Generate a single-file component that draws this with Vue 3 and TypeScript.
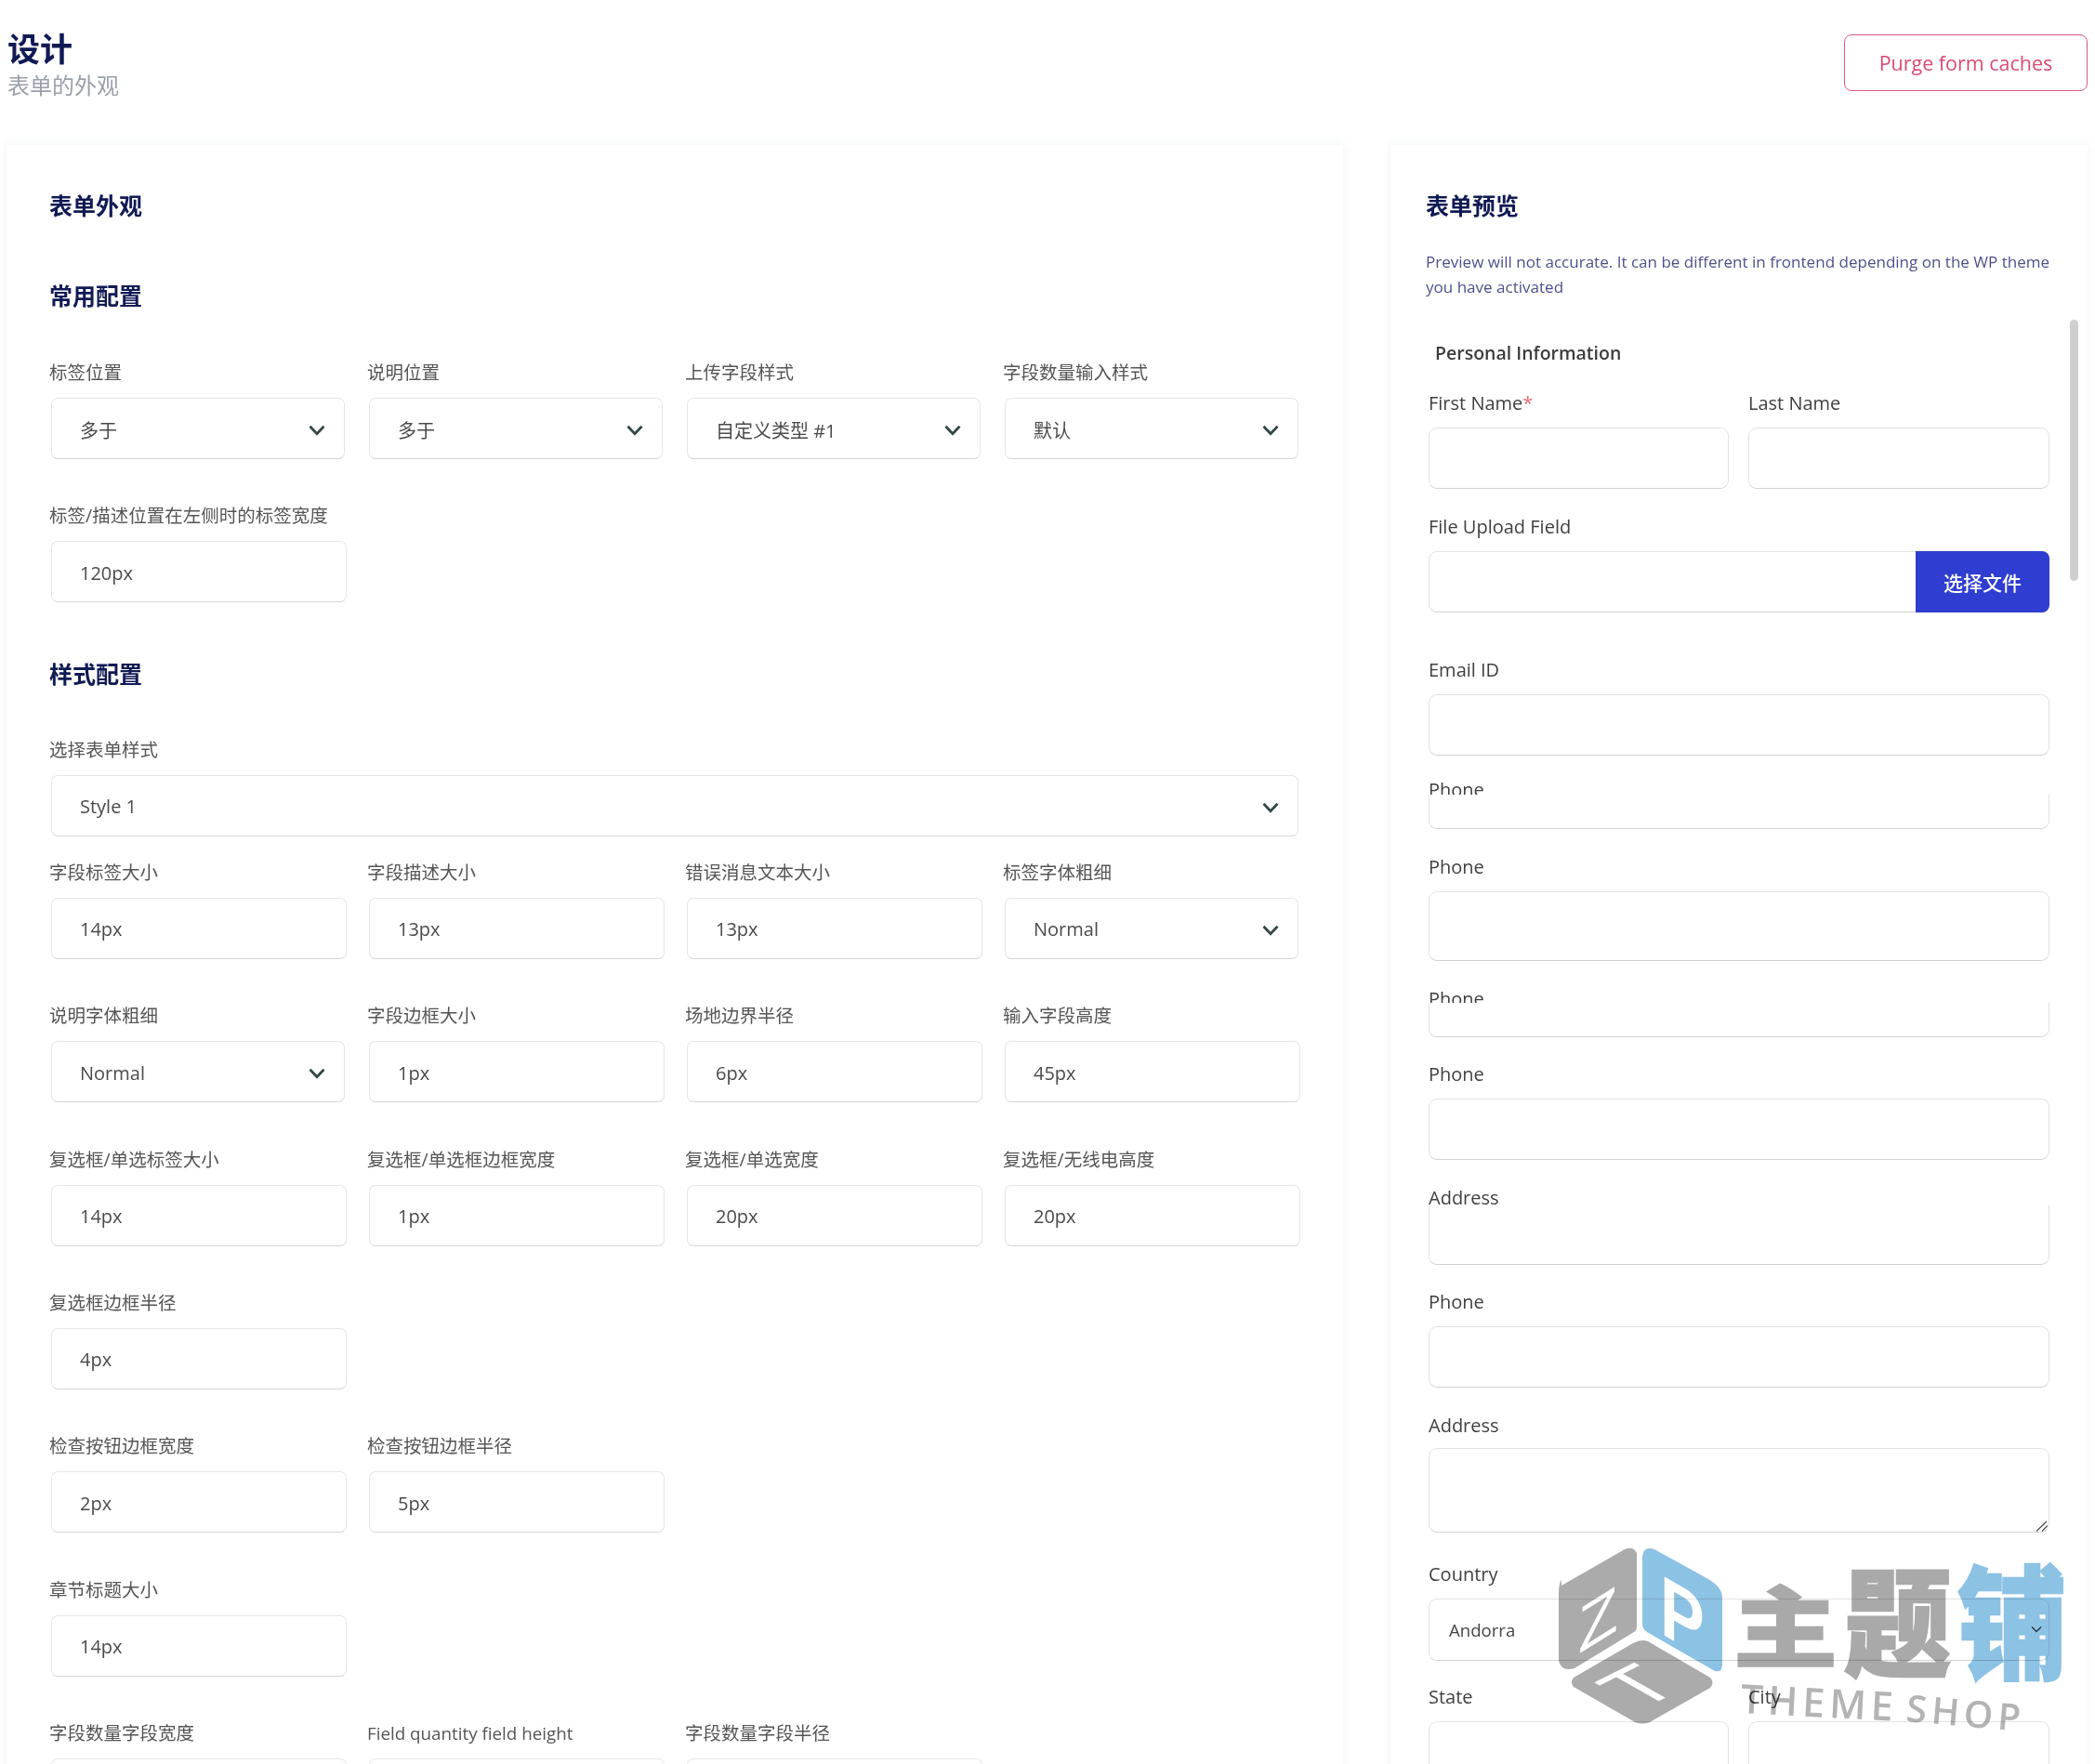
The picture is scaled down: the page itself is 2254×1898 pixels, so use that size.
<template>
  <div class="page">
    <header class="top">
      <div>
        <h1 class="title">设计</h1>
        <p class="subtitle">表单的外观</p>
      </div>
      <button class="purge">Purge form caches</button>
    </header>

    <div class="columns">
      <section class="card left">
        <h2 class="heading">表单外观</h2>
        <h2 class="heading second">常用配置</h2>
        <div class="grid first-grid">
          <div v-for="f in commonFields" :key="f.label" class="field" :class="{ breakrow: f.newRow }">
            <label class="label">{{ f.label }}</label>
            <div class="control" :class="{ sel: f.select }">
              <span>{{ f.value }}</span>
              <svg v-if="f.select" class="chev" viewBox="0 0 18 12"><path d="M1.500 1.800 9 9.800l7.500-8" /></svg>
            </div>
          </div>
        </div>

        <h2 class="heading third">样式配置</h2>
        <div class="wide-field">
          <label class="label">选择表单样式</label>
          <div class="control sel wide">
            <span>Style 1</span>
            <svg class="chev" viewBox="0 0 18 12"><path d="M1.500 1.800 9 9.800l7.500-8" /></svg>
          </div>
        </div>
        <div class="grid">
          <div v-for="f in styleFields" :key="f.label" class="field" :class="{ breakrow: f.newRow }">
            <label class="label" :class="{ latin: f.latin }">{{ f.label }}</label>
            <div class="control" :class="{ sel: f.select }">
              <span>{{ f.value }}</span>
              <svg v-if="f.select" class="chev" viewBox="0 0 18 12"><path d="M1.500 1.800 9 9.800l7.500-8" /></svg>
            </div>
          </div>
        </div>
      </section>

      <section class="card right">
        <h2 class="heading">表单预览</h2>
        <p class="note">Preview will not accurate. It can be different in frontend depending on the WP theme you have activated</p>
        <div class="preview">
          <div class="thumb"></div>
          <h3 class="section-title">Personal Information</h3>

          <div class="two">
            <div>
              <label class="plabel">First Name<em>*</em></label>
              <input class="pinput" type="text" />
            </div>
            <div>
              <label class="plabel">Last Name</label>
              <input class="pinput" type="text" />
            </div>
          </div>

          <div class="pfield">
            <label class="plabel">File Upload Field</label>
            <div class="upload"><button class="choose">选择文件</button></div>
          </div>

          <div class="pfield email">
            <label class="plabel">Email ID</label>
            <input class="pinput" type="text" />
          </div>

          <div class="pfield phone-cut">
            <label class="plabel">Phone</label>
            <input class="pinput cut" type="text" />
          </div>
          <div class="pfield">
            <label class="plabel">Phone</label>
            <input class="pinput tall" type="text" />
          </div>
          <div class="pfield">
            <label class="plabel">Phone</label>
            <input class="pinput cut" type="text" />
          </div>
          <div class="pfield tight">
            <label class="plabel">Phone</label>
            <input class="pinput" type="text" />
          </div>
          <div class="pfield">
            <label class="plabel">Address</label>
            <input class="pinput addr" type="text" />
          </div>
          <div class="pfield tight">
            <label class="plabel">Phone</label>
            <input class="pinput" type="text" />
          </div>
          <div class="pfield area-field">
            <label class="plabel">Address</label>
            <textarea class="pinput area"></textarea>
            <svg class="grip" viewBox="0 0 13 12"><path d="M1 11.500 12 1M7 11.500l6-6" /></svg>
          </div>
          <div class="pfield country">
            <label class="plabel">Country</label>
            <div class="pselect">
              <span>Andorra</span>
              <svg class="mini" viewBox="0 0 12 8"><path d="M1 1.500 6 6.500l5-5" /></svg>
            </div>
          </div>
          <div class="two state">
            <div>
              <label class="plabel">State</label>
              <input class="pinput" type="text" />
            </div>
            <div>
              <label class="plabel">City</label>
              <input class="pinput" type="text" />
            </div>
          </div>
        </div>
      </section>
    </div>

    <!-- watermark over the preview column -->
    <svg class="mark" viewBox="1660 1650 580 230" width="580" height="230">
      <path class="g" stroke-linejoin="round" d="M1680 1706 1748 1667q9-4 13 4v80q0 3-3 5l-64 39q-14 4-17-8v-72q0-12 3-15z" />
      <path class="b" d="M1767 1675q1-12 13-8l58 32q15 9 15 20v72q0 9-8 7l-73-42q-5-3-5-9z" />
      <path class="g" d="M1757 1768q9-5 16-2l67 39q5 6 0 11l-65 37q-8 3-16 0l-66-38q-4-5 0-10z" />
      <text class="cube" transform="translate(1698 1780) skewY(-32)" font-size="70">Z</text>
      <text class="cube heavy" transform="translate(1786 1757) skewY(30) scale(.78 1)" font-size="92">P</text>
      <text class="cube" transform="matrix(1.086 -.543 1.067 .6 1765 1840)" font-size="70">T</text>
      <text class="cn grey" transform="translate(1865 1787) scale(1 .85)">主</text>
      <text class="cn grey" transform="translate(1984 1794) scale(1.030 1.140)">题</text>
      <text class="cn blue" transform="translate(2106 1796) scale(1.050 1.180)">铺</text>
      <text class="en" transform="translate(1872 1843) rotate(3)" font-size="43">THEME</text>
      <text class="en" transform="translate(2050 1852) rotate(5)" font-size="40">SHOP</text>
    </svg>
  </div>
</template>

<script setup lang="ts">
interface Field {
  label: string
  value: string
  select?: boolean
  newRow?: boolean
  latin?: boolean
}

const commonFields: Field[] = [
  { label: '标签位置', value: '多于', select: true },
  { label: '说明位置', value: '多于', select: true },
  { label: '上传字段样式', value: '自定义类型 #1', select: true },
  { label: '字段数量输入样式', value: '默认', select: true },
  { label: '标签/描述位置在左侧时的标签宽度', value: '120px', newRow: true },
]

const styleFields: Field[] = [
  { label: '字段标签大小', value: '14px' },
  { label: '字段描述大小', value: '13px' },
  { label: '错误消息文本大小', value: '13px' },
  { label: '标签字体粗细', value: 'Normal', select: true },
  { label: '说明字体粗细', value: 'Normal', select: true },
  { label: '字段边框大小', value: '1px' },
  { label: '场地边界半径', value: '6px' },
  { label: '输入字段高度', value: '45px' },
  { label: '复选框/单选标签大小', value: '14px' },
  { label: '复选框/单选框边框宽度', value: '1px' },
  { label: '复选框/单选宽度', value: '20px' },
  { label: '复选框/无线电高度', value: '20px' },
  { label: '复选框边框半径', value: '4px', newRow: true },
  { label: '检查按钮边框宽度', value: '2px', newRow: true },
  { label: '检查按钮边框半径', value: '5px' },
  { label: '章节标题大小', value: '14px', newRow: true },
  { label: '字段数量字段宽度', value: '', newRow: true },
  { label: 'Field quantity field height', value: '', latin: true },
  { label: '字段数量字段半径', value: '' },
]
</script>

<style scoped>
.page {
  position: relative;
  height: 1898px;
  overflow: hidden;
  background: #fff;
  font-family: "Open Sans", "Noto Sans CJK SC", sans-serif;
  color: #444;
}

.top {
  display: flex;
  justify-content: space-between;
  align-items: flex-start;
  height: 156px;
  padding: 34px 8px 0 8px;
  box-sizing: border-box;
}

.title {
  margin: 0;
  font-size: 35px;
  line-height: 38px;
  font-weight: 700;
  color: #101a54;
}

.subtitle {
  margin: 3px 0 0;
  font-size: 24px;
  line-height: 34px;
  color: #9a9fab;
}

.purge {
  width: 262px;
  height: 61px;
  margin-top: 3px;
  border: 1.500px solid #dc5a7f;
  border-radius: 8px;
  background: #fff;
  color: #db4a74;
  font-family: inherit;
  font-size: 21.500px;
  font-weight: 500;
}

.columns {
  display: grid;
  grid-template-columns: 1438px 750px;
  column-gap: 51px;
  padding-left: 7px;
}

.card {
  background: #fff;
  height: 1750px;
  box-shadow: 0 0 9px rgba(90, 130, 170, 0.1);
  box-sizing: border-box;
}

.left {
  padding: 47px 0 0 46px;
}

.heading {
  margin: 0;
  font-size: 25px;
  line-height: 36px;
  font-weight: 700;
  color: #101a54;
}

.second {
  margin-top: 61px;
}

.third {
  margin-top: 59px;
}

.first-grid {
  margin-top: 51px;
}

.grid {
  display: grid;
  grid-template-columns: repeat(4, 320px);
  column-gap: 22px;
  row-gap: 47.330px;
}

.breakrow {
  grid-column-start: 1;
}

.wide-field {
  margin-top: 49.600px;
  margin-bottom: 25px;
}

.label {
  display: block;
  font-size: 19.500px;
  line-height: 28px;
  margin-bottom: 13px;
  color: #555;
  white-space: nowrap;
}

.latin {
  font-size: 18.800px;
}

.control {
  display: flex;
  align-items: center;
  justify-content: space-between;
  width: 318px;
  height: 66px;
  margin-left: 2px;
  padding: 2px 20px 0 30px;
  border: 1px solid #e6e6e6;
  border-bottom-color: #d6d6d6;
  border-radius: 7px;
  box-sizing: border-box;
  background: #fff;
  font-size: 20px;
  color: #4a4a4a;
}

.sel {
  width: 316px;
}

.wide {
  width: 1342px;
}

.chev {
  width: 18px;
  height: 12px;
  margin-top: 2px;
  fill: none;
  stroke: #344848;
  stroke-width: 2.800;
}

.right {
  padding: 47px 0 0 38px;
}

.note {
  width: 690px;
  margin: 29px 0 0;
  font-size: 17.050px;
  line-height: 27px;
  color: #4f4f8d;
}

.preview {
  position: relative;
  margin-top: 19px;
  padding: 0 0 0 3px;
  width: 671px;
}

.thumb {
  position: absolute;
  left: 693px;
  top: 3px;
  width: 9px;
  height: 281px;
  border-radius: 5px;
  background: #cfcfcf;
}

.section-title {
  margin: 0 0 0 7px;
  padding-top: 21px;
  font-size: 19.500px;
  line-height: 36px;
  font-weight: 600;
  color: #3c3c3c;
}

.two {
  display: grid;
  grid-template-columns: 323px 324px;
  column-gap: 21px;
  margin-top: 22px;
}

.plabel {
  display: block;
  font-size: 20px;
  line-height: 28px;
  margin-bottom: 12px;
  color: #3f3f3f;
}

.plabel em {
  color: #e46a7c;
  font-style: normal;
}

.pinput {
  display: block;
  width: 100%;
  height: 66px;
  padding: 0;
  border: 1px solid #e2e2e2;
  border-bottom-color: #d2d2d2;
  border-radius: 9px;
  box-sizing: border-box;
  background: #fff;
  outline: none;
  font: inherit;
}

.pfield {
  width: 668px;
  margin-top: 27px;
}

.tight {
  margin-top: 26px;
}

.upload {
  display: flex;
  justify-content: flex-end;
  height: 66px;
  border: 1px solid #e2e2e2;
  border-bottom-color: #d2d2d2;
  border-radius: 9px;
  box-sizing: border-box;
}

.choose {
  width: 144px;
  margin: -1px -1px -1px 0;
  border: none;
  border-radius: 0 8px 8px 0;
  background: #2f3dd0;
  color: #fff;
  font-family: inherit;
  font-size: 21px;
  font-weight: 500;
}

.email {
  margin-top: 48px;
}

/* these inputs sit over the lower half of their own label */
.cut {
  position: relative;
  height: 37px;
  margin-top: -21.500px;
  border-top: none;
  border-radius: 0 0 9px 9px;
}

.phone-cut {
  margin-top: 23px;
}

.tall {
  height: 75px;
}

.addr {
  position: relative;
  height: 64px;
  margin-top: -18.500px;
  border-top: none;
  border-radius: 0 0 9px 9px;
  background: transparent;
}

.area-field {
  position: relative;
}

.area-field .plabel {
  margin-bottom: 10px;
}

.area {
  height: 91px;
  resize: none;
}

.grip {
  position: absolute;
  right: 2px;
  bottom: 1px;
  width: 13px;
  height: 12px;
  fill: none;
  stroke: #4a4a4a;
  stroke-width: 1.200;
}

.country {
  margin-top: 31px;
}

.pselect {
  display: flex;
  align-items: center;
  justify-content: space-between;
  height: 67px;
  padding: 0 7px 0 21px;
  border: 1px solid #e2e2e2;
  border-bottom-color: #d2d2d2;
  border-radius: 9px;
  box-sizing: border-box;
  font-size: 18.600px;
  color: #444;
}

.mini {
  width: 12px;
  height: 8px;
  fill: none;
  stroke: #444;
  stroke-width: 1.400;
}

.state {
  margin-top: 25px;
}

.mark {
  position: absolute;
  left: 1660px;
  top: 1650px;
  mix-blend-mode: multiply;
  pointer-events: none;
}

.g {
  fill: #ababab;
}

.b {
  fill: #8cc2e4;
}

.cube {
  font-family: "Liberation Sans", sans-serif;
  fill: #fff;
}

.heavy {
  font-weight: 700;
}

.cn {
  font-family: "Noto Sans CJK SC", sans-serif;
  font-weight: 900;
  font-size: 112px;
  stroke-width: 2px;
}

.grey {
  fill: #a9a9a9;
  stroke: #a9a9a9;
}

.blue {
  fill: #8cc2e4;
  stroke: #8cc2e4;
}

.en {
  font-family: "Open Sans", sans-serif;
  font-weight: 600;
  letter-spacing: 5px;
  fill: #b4b4b4;
}
</style>
